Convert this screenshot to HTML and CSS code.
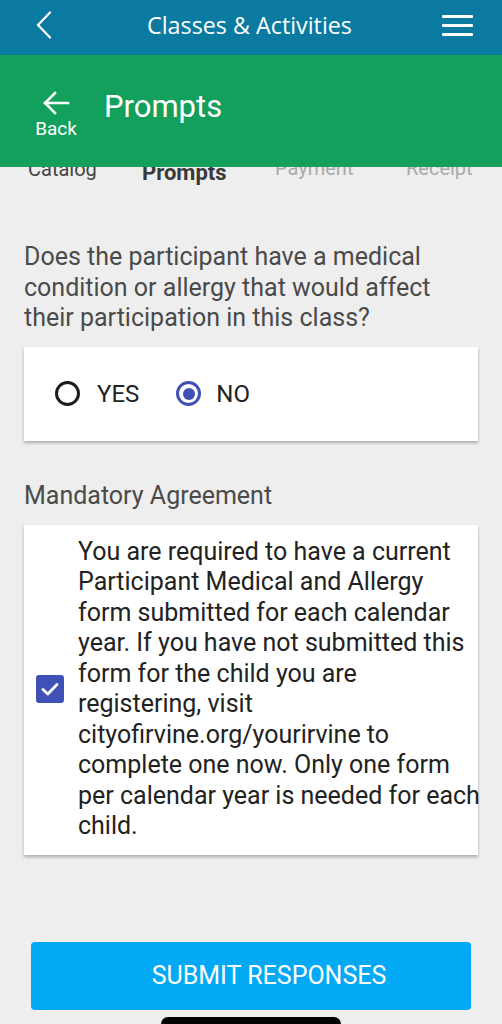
FILE: index.html
```html
<!DOCTYPE html>
<html>
<head>
<meta charset="utf-8">
<link rel="stylesheet" href="styles.css">
</head>
<body>
<div class="topbar">
  <svg class="chev" width="16" height="28" viewBox="0 0 16 28"><path d="M14 1.5 L2 14 L14 26.5" fill="none" stroke="#fff" stroke-width="2.2" stroke-linecap="round" stroke-linejoin="round"/></svg>
  <div class="apptitle">Classes &amp; Activities</div>
  <div class="burger"><span></span><span></span><span></span></div>
</div>
<div class="header">
  <div class="back">
    <svg width="28" height="24" viewBox="0 0 28 24"><path d="M26 12 H3 M13 2 L3 12 L13 22" fill="none" stroke="#fff" stroke-width="2.6" stroke-linecap="square"/></svg>
    <span>Back</span>
  </div>
  <div class="title">Prompts</div>
</div>
<div class="tabs">
  <span class="tab done">Catalog</span>
  <span class="tab active">Prompts</span>
  <span class="tab">Payment</span>
  <span class="tab">Receipt</span>
</div>
<main class="content">
  <p class="question">Does the participant have a medical condition or allergy that would affect their participation in this class?</p>
  <div class="card radios">
    <label class="opt"><span class="radio"></span>YES</label>
    <label class="opt"><span class="radio on"></span>NO</label>
  </div>
  <p class="label">Mandatory Agreement</p>
  <div class="card agree">
    <span class="check"><svg width="18" height="14" viewBox="0 0 18 14"><path d="M2 7.5 L6.8 12 L16 2.5" fill="none" stroke="#fff" stroke-width="2.8" stroke-linecap="round" stroke-linejoin="round"/></svg></span>
    <p class="agree-text">You are required to have a current Participant Medical and Allergy form submitted for each calendar year. If you have not submitted this form for the child you are registering, visit cityofirvine.org/yourirvine to complete one now. Only one form per calendar year is needed for each child.</p>
  </div>
  <button class="submit">SUBMIT RESPONSES</button>
</main>
<div class="home"></div>
</body>
</html>
```
FILE: styles.css
```css
* { box-sizing: border-box; }
html, body { margin: 0; padding: 0; }
body {
  width: 502px;
  height: 1024px;
  overflow: hidden;
  background: #eeeeee;
  font-family: Roboto, "Liberation Sans", sans-serif;
  position: relative;
}
.topbar {
  height: 55px;
  background: #0a7aa1;
  display: flex;
  align-items: center;
  padding: 0 29px 0 36px;
  color: #fff;
}
.chev { display: block; margin-top: -5px; }
.apptitle {
  flex: 1;
  text-align: center;
  font-family: "Open Sans", sans-serif;
  font-size: 23.3px;
  margin-top: -5px;
  padding-left: 5px;
}
.burger { display: flex; flex-direction: column; gap: 6px; width: 31px; margin-top: -4px; }
.burger span { display: block; height: 3px; background: #fff; border-radius: 1px; }
.header {
  height: 112px;
  background: #13a05c;
  display: flex;
  align-items: center;
  padding-left: 36px;
  color: #fff;
  position: relative;
  z-index: 2;
}
.back {
  display: flex;
  flex-direction: column;
  align-items: center;
  width: 40px;
  margin-top: 8px;
}
.back svg { display: block; }
.back span { font-size: 19px; line-height: 22px; margin-top: 3px; }
.title { font-size: 31px; margin-left: 28px; margin-top: -10px; }
.tabs {
  position: relative;
  height: 20px;
  overflow: hidden;
  font-size: 20px;
  color: #aaa;
}
.tab { display: block; position: absolute; top: -8px; line-height: 20px; }
.tab.done { left: 28px; color: #444; }
.tab.active { left: 142px; color: #3a3a3a; font-weight: bold; font-size: 22px; top: -4px; }
.tab:nth-child(3) { left: 275px; top: -9px; }
.tab:nth-child(4) { left: 406px; top: -9px; }
.content { padding: 0 24px; }
.question {
  margin: 55px 0 0;
  font-size: 25px;
  line-height: 30.5px;
  color: #4a4a4a;
}
.card {
  background: #fff;
  box-shadow: 0 2px 3px rgba(0,0,0,0.28);
}
.radios {
  margin-top: 13px;
  height: 94px;
  display: flex;
  align-items: center;
  padding-left: 31px;
  gap: 37px;
}
.opt { display: flex; align-items: center; font-size: 24px; color: #222; }
.radio {
  width: 25px; height: 25px;
  border: 3px solid #1c1c1c;
  border-radius: 50%;
  margin-right: 17px;
  position: relative;
}
.radio.on { border-color: #3f51b5; margin-right: 15px; }
.radio.on::after {
  content: "";
  position: absolute;
  left: 3.5px; top: 3.5px;
  width: 12px; height: 12px;
  border-radius: 50%;
  background: #3f51b5;
}
.label {
  margin: 40px 0 0;
  font-size: 25px;
  line-height: 30px;
  color: #4a4a4a;
}
.agree {
  margin-top: 14px;
  display: flex;
  align-items: center;
  padding: 12px 0 13px 12px;
}
.check {
  flex: none;
  width: 28px; height: 28px;
  border-radius: 3px;
  background: #3f51b5;
  display: flex;
  align-items: center;
  justify-content: center;
  margin-right: 14px;
}
.agree-text {
  margin: 0 -3px 0 0;
  font-size: 25px;
  line-height: 30.5px;
  color: #222;
}
.submit {
  display: block;
  width: 440px;
  height: 68px;
  margin: 87px 0 0 7px;
  border: none;
  border-radius: 4px;
  background: #03a9f4;
  color: #fff;
  font-family: Roboto, sans-serif;
  font-size: 25px;
  padding: 0 0 0 36px;
}
.home {
  position: absolute;
  left: 161px;
  top: 1017px;
  width: 180px;
  height: 14px;
  border-radius: 7px;
  background: #000;
}
```
